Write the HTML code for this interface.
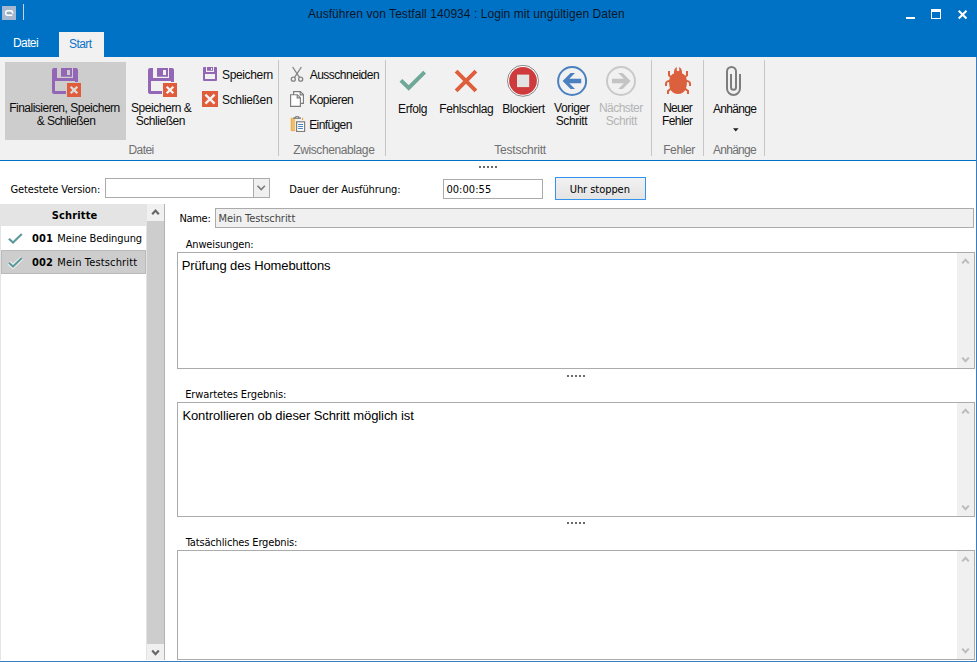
<!DOCTYPE html>
<html lang="de">
<head>
<meta charset="utf-8">
<title>Ausführen von Testfall 140934 : Login mit ungültigen Daten</title>
<style>
html,body{margin:0;padding:0;background:#fff;}
body{width:977px;height:662px;overflow:hidden;font-family:'Liberation Sans',sans-serif;}
#win{position:relative;width:977px;height:662px;overflow:hidden;background:#fff;}
#win div,#win svg{position:absolute;box-sizing:border-box;}
.t{position:absolute;line-height:1;white-space:nowrap;font-family:'Liberation Sans',sans-serif;}
.sep{width:1px;top:60px;height:96px;background:#c6c6c6;}
.box{border:1px solid #ababab;background:#fff;}
.dots{width:18px;height:2px;background:repeating-linear-gradient(90deg,#6a6a6a 0 2px,transparent 2px 4px);}
.sb{background:#f0f0f0;}

</style>
</head>
<body>
<div id="win">
<!-- title bar + tabs -->
<div style="left:0;top:0;width:977px;height:57px;background:#0072c6;"></div>
<div style="left:59px;top:32px;width:45px;height:25px;background:#f1f1f1;"></div>
<!-- ribbon -->
<div style="left:0;top:57px;width:977px;height:103px;background:#f1f1f1;"></div>
<div style="left:0;top:160px;width:977px;height:1px;background:#0072c6;"></div>
<div style="left:5px;top:62px;width:121px;height:78px;background:#cdcdcd;"></div>
<div class="sep" style="left:278px;"></div>
<div class="sep" style="left:385px;"></div>
<div class="sep" style="left:651px;"></div>
<div class="sep" style="left:703px;"></div>
<div class="sep" style="left:764px;"></div>
<!-- window border -->
<div style="left:976px;top:57px;width:1px;height:605px;background:#3a7ebf;"></div>
<div style="left:0;top:661px;width:977px;height:1px;background:#3a7ebf;"></div>
<div style="left:0;top:204px;width:1px;height:456px;background:#e4e4e4;"></div>
<!-- form row -->
<div class="dots" style="left:479px;top:166px;"></div>
<div class="box" style="left:105px;top:178px;width:165px;height:20px;"></div>
<div style="left:253px;top:179px;width:16px;height:18px;background:#f0f0f0;border-left:1px solid #ababab;"></div>
<div class="box" style="left:443px;top:179px;width:100px;height:20px;"></div>
<div style="left:555px;top:177px;width:91px;height:23px;border:1px solid #3393ee;background:linear-gradient(#f1f1f1,#e4e4e4);"></div>
<!-- steps list -->
<div style="left:0;top:204px;width:147px;height:22px;background:#e4e4e4;"></div>
<div style="left:1px;top:250px;width:145px;height:24px;background:#cdcdcd;border:1px solid #bababa;"></div>
<div style="left:146px;top:204px;width:1px;height:456px;background:#e4e4e4;"></div>
<div style="left:147px;top:204px;width:17px;height:456px;background:#f0f0f0;"></div>
<div style="left:147px;top:221px;width:17px;height:423px;background:#cdcdcd;"></div>
<div style="left:164px;top:204px;width:1px;height:456px;background:#b4b4b4;"></div>
<!-- right form -->
<div class="box" style="left:215px;top:208px;width:759px;height:20px;background:#f0f0f0;"></div>
<div class="box" style="left:177px;top:252px;width:798px;height:117px;"></div>
<div class="sb" style="left:957px;top:253px;width:17px;height:115px;"></div>
<div class="dots" style="left:567px;top:375px;"></div>
<div class="box" style="left:177px;top:402px;width:798px;height:115px;"></div>
<div class="sb" style="left:957px;top:403px;width:17px;height:113px;"></div>
<div class="dots" style="left:567px;top:522px;"></div>
<div class="box" style="left:177px;top:550px;width:798px;height:110px;"></div>
<div class="sb" style="left:957px;top:551px;width:17px;height:108px;"></div>
<!-- app icon -->
<svg style="left:2px;top:6px;" width="14" height="14" viewBox="0 0 14 14"><rect width="14" height="14" fill="#a5b8d0"/><rect x="5" y="6.2" width="4.6" height="1.8" fill="#92a7c2"/><path d="M10.7 7.4 C10.7 5.5 9.9 4.7 8.6 4.7 H5.7 C4.3 4.7 3.6 5.6 3.6 7 C3.6 8.4 4.3 9.3 5.7 9.3 H10.3" fill="none" stroke="#fff" stroke-width="1.5"/></svg>
<div style="left:23px;top:4px;width:1px;height:16px;background:#cdd0d4;"></div>
<!-- window buttons -->
<div style="left:906px;top:17px;width:9px;height:2px;background:#fff;"></div>
<div style="left:931px;top:9px;width:10px;height:10px;border:1px solid #fff;border-top-width:3px;"></div>
<svg style="left:957px;top:9px;" width="12" height="12" viewBox="0 0 12 12"><path d="M1.7 1.7 L9.5 9.5 M9.5 1.7 L1.7 9.5" stroke="#fff" stroke-width="2" fill="none"/></svg>
<!-- big save+close icons -->
<svg style="left:50px;top:66px;" width="32" height="32" viewBox="0 0 32 32"><path fill="#9467b6" fill-rule="evenodd" d="M4 2 H26 Q28 2 28 4 V26 Q28 28 26 28 H4 Q2 28 2 26 V4 Q2 2 4 2 Z M7 2 V12 H23 V2 H22 V10.7 H11 V2 Z M17 4 H20 V9 H17 Z M5 15 H25 V25 H5 Z"/><rect x="16" y="16" width="16" height="16" fill="#cdcdcd"/><rect x="17" y="17" width="14" height="14" fill="#df5d3a"/><path d="M20.7 20.7 L27.3 27.3 M27.3 20.7 L20.7 27.3" stroke="#dcdcdc" stroke-width="2.3" fill="none"/></svg>
<svg style="left:146px;top:66px;" width="32" height="32" viewBox="0 0 32 32"><path fill="#9467b6" fill-rule="evenodd" d="M4 2 H26 Q28 2 28 4 V26 Q28 28 26 28 H4 Q2 28 2 26 V4 Q2 2 4 2 Z M7 2 V12 H23 V2 H22 V10.7 H11 V2 Z M17 4 H20 V9 H17 Z M5 15 H25 V25 H5 Z"/><rect x="16" y="16" width="16" height="16" fill="#f1f1f1"/><rect x="17" y="17" width="14" height="14" fill="#df5d3a"/><path d="M20.7 20.7 L27.3 27.3 M27.3 20.7 L20.7 27.3" stroke="#f4f4f4" stroke-width="2.3" fill="none"/></svg>
<!-- small save -->
<svg style="left:202px;top:66px;" width="16" height="16" viewBox="0 0 16 16"><path fill="#9467b6" fill-rule="evenodd" d="M2 1 H14 Q15 1 15 2 V14 Q15 15 14 15 H2 Q1 15 1 14 V2 Q1 1 2 1 Z M4 1 V6 H12 V1 H11 V4.7 H5 V1 Z M9 2 H10 V4 H9 Z M3 8 H13 V13 H3 Z"/></svg>
<!-- small close -->
<svg style="left:202px;top:91px;" width="16" height="16" viewBox="0 0 16 16"><rect width="16" height="16" fill="#df5d3a"/><path d="M3.4 3.6 L12.6 12.6 M12.6 3.6 L3.4 12.6" stroke="#f4f4f4" stroke-width="2.4" fill="none"/></svg>
<!-- scissors -->
<svg style="left:289px;top:66px;" width="16" height="16" viewBox="0 0 16 16"><g fill="none" stroke="#848484" stroke-width="1.3"><path d="M3.6 1 L10.6 11.6"/><path d="M12.4 1 L5.4 11.6"/><circle cx="4.3" cy="13.2" r="2"/><circle cx="11.7" cy="13.2" r="2"/></g></svg>
<!-- copy -->
<svg style="left:289px;top:91px;" width="16" height="16" viewBox="0 0 16 16"><g fill="#fff" stroke="#7c7c7c" stroke-width="1.15"><path d="M4.6 0.6 H11.4 L14.4 3.6 V12.4 H4.6 Z"/><path d="M11.2 0.8 V3.8 H14.2" fill="none"/><path d="M1.6 3.7 H8.4 L11.4 6.7 V15.4 H1.6 Z"/><path d="M8.2 3.9 V6.9 H11.2" fill="none"/></g></svg>
<!-- paste -->
<svg style="left:290px;top:116px;" width="16" height="16" viewBox="0 0 16 16"><rect x="0.9" y="1.8" width="4.2" height="13.2" fill="#edc06c"/><path d="M1.3 1.8 V14.6 H5.1" fill="none" stroke="#e8a93c" stroke-width="0.9"/><rect x="12" y="1.8" width="1.1" height="2.3" fill="#e8a93c"/><rect x="3.3" y="1.3" width="7.6" height="1.6" fill="#7e7e7e"/><rect x="5.1" y="0.1" width="4" height="2" rx="0.9" fill="#7e7e7e"/><rect x="6.2" y="0.9" width="1.8" height="0.8" fill="#e4e4e4"/><rect x="6.6" y="5.8" width="8" height="9.7" fill="#fff" stroke="#7e7e7e" stroke-width="1.2"/><path d="M8.2 8.5 H13 M8.2 10.5 H13 M8.2 12.5 H13" stroke="#4a86c8" stroke-width="1"/></svg>
<!-- check -->
<svg style="left:396px;top:65px;" width="32" height="32" viewBox="0 0 32 32"><path d="M4.9 15.4 L12.7 23 L28.6 7.1" fill="none" stroke="#70a897" stroke-width="4"/></svg>
<!-- fail X -->
<svg style="left:450px;top:65px;" width="32" height="32" viewBox="0 0 32 32"><path d="M6.1 6.1 L25.9 25.9 M25.9 6.1 L6.1 25.9" fill="none" stroke="#de5f3c" stroke-width="4"/></svg>
<!-- blocked -->
<svg style="left:507px;top:65px;" width="32" height="32" viewBox="0 0 32 32"><circle cx="16" cy="15.8" r="15.5" fill="#fff" stroke="#6a6a6a" stroke-width="0.8"/><circle cx="16" cy="15.8" r="13.9" fill="#cf3a3c"/><rect x="10" y="9.6" width="12.2" height="12.5" fill="#e2e2e2"/></svg>
<!-- previous -->
<svg style="left:556px;top:65px;" width="32" height="32" viewBox="0 0 32 32"><circle cx="16.1" cy="16" r="14" fill="none" stroke="#4a80bf" stroke-width="2"/><path d="M6.6 16 L14.6 8 H19 L13.3 13.7 H25.2 V18.3 H13.3 L19 24 H14.6 Z" fill="#4a80bf"/></svg>
<!-- next (disabled) -->
<svg style="left:605px;top:65px;" width="32" height="32" viewBox="0 0 32 32"><circle cx="16" cy="16" r="14" fill="none" stroke="#c9c9c9" stroke-width="2"/><path d="M25.6 16 L17.6 8 H13.2 L18.9 13.7 H7 V18.3 H18.9 L13.2 24 H17.6 Z" fill="#c4c4c4"/></svg>
<!-- bug -->
<svg style="left:662px;top:65px;" width="32" height="32" viewBox="0 0 32 32"><g fill="#db603e"><path d="M16 7.8 C22.6 7.8 24.9 12 24.9 17.5 C24.9 24.5 21.6 29 16 29 C10.4 29 7.1 24.5 7.1 17.5 C7.1 12 9.4 7.8 16 7.8 Z"/><path d="M12 11 V7.2 Q12 3.6 14.8 2 V6 H17.2 V2 Q20 3.6 20 7.2 V11 Z"/></g><g fill="none" stroke="#db603e" stroke-width="2"><path d="M7 6 V10.4 L10.5 13.4"/><path d="M25 6 V10.4 L21.5 13.4"/><path d="M9 15.4 L5.6 16.4 Q4 17 4 18.6 V21"/><path d="M23 15.4 L26.4 16.4 Q28 17 28 18.6 V21"/><path d="M10.5 22.6 L6 26 V29"/><path d="M21.5 22.6 L26 26 V29"/></g></svg>
<!-- paperclip -->
<svg style="left:718px;top:65px;" width="32" height="32" viewBox="0 0 32 32"><path d="M22 9 V23.4 A6.5 6.5 0 0 1 9 23.4 V6.5 A4.5 4.5 0 0 1 18 6.5 V22.2 A2.5 2.5 0 0 1 13 22.2 V9" fill="none" stroke="#7d7d7d" stroke-width="2"/></svg>
<!-- dropdown arrow -->
<svg style="left:733px;top:128px;" width="6" height="4" viewBox="0 0 6 4"><path d="M0 0.3 H5.6 L2.8 3.4 Z" fill="#1e1e1e"/></svg>
<!-- combo chevron -->
<svg style="left:256px;top:184px;" width="10" height="8" viewBox="0 0 10 8"><path d="M1.5 1.7 L5.2 5.6 L8.9 1.7" fill="none" stroke="#7a7a7a" stroke-width="1.6"/></svg>
<!-- list checks -->
<svg style="left:7px;top:232px;" width="17" height="14" viewBox="0 0 17 14"><path d="M1.9 6.7 L6 10.5 L14.8 2.1" fill="none" stroke="#5a9a98" stroke-width="2.1"/></svg>
<svg style="left:7px;top:256px;" width="17" height="14" viewBox="0 0 17 14"><path d="M1.9 6.7 L6 10.5 L14.8 2.1" fill="none" stroke="#f6f6f6" stroke-width="4"/><path d="M1.9 6.7 L6 10.5 L14.8 2.1" fill="none" stroke="#5a9a98" stroke-width="2.1"/></svg>
<!-- scroll arrows -->
<svg style="left:151px;top:208px;" width="9" height="8" viewBox="0 0 9 8"><path d="M1.2 6.2 L4.5 2.6 L7.8 6.2" fill="none" stroke="#666" stroke-width="2.2"/></svg>
<svg style="left:151px;top:649px;" width="9" height="8" viewBox="0 0 9 8"><path d="M1.2 1.6 L4.5 5.2 L7.8 1.6" fill="none" stroke="#666" stroke-width="2.2"/></svg>
<svg style="left:961px;top:257px;" width="9" height="8" viewBox="0 0 9 8"><path d="M1.2 6.4 L4.5 2.8 L7.8 6.4" fill="none" stroke="#bdbdbd" stroke-width="2.1"/></svg>
<svg style="left:961px;top:356px;" width="9" height="8" viewBox="0 0 9 8"><path d="M1.2 1.6 L4.5 5.2 L7.8 1.6" fill="none" stroke="#bdbdbd" stroke-width="2.1"/></svg>
<svg style="left:961px;top:407px;" width="9" height="8" viewBox="0 0 9 8"><path d="M1.2 6.4 L4.5 2.8 L7.8 6.4" fill="none" stroke="#bdbdbd" stroke-width="2.1"/></svg>
<svg style="left:961px;top:504px;" width="9" height="8" viewBox="0 0 9 8"><path d="M1.2 1.6 L4.5 5.2 L7.8 1.6" fill="none" stroke="#bdbdbd" stroke-width="2.1"/></svg>
<svg style="left:961px;top:555px;" width="9" height="8" viewBox="0 0 9 8"><path d="M1.2 6.4 L4.5 2.8 L7.8 6.4" fill="none" stroke="#bdbdbd" stroke-width="2.1"/></svg>
<svg style="left:961px;top:647px;" width="9" height="8" viewBox="0 0 9 8"><path d="M1.2 1.6 L4.5 5.2 L7.8 1.6" fill="none" stroke="#bdbdbd" stroke-width="2.1"/></svg>

<span class="t" style="left:307.9px;top:8px;font-size:12px;color:#0a1626;letter-spacing:0.05px;">Ausführen von Testfall 140934 : Login mit ungültigen Daten</span>
<span class="t" style="left:13.0px;top:37px;font-size:12px;color:#ffffff;letter-spacing:-0.60px;">Datei</span>
<span class="t" style="left:69.1px;top:38px;font-size:12px;color:#0d74c8;letter-spacing:-0.60px;">Start</span>
<span class="t" style="left:9.2px;top:102px;font-size:12px;color:#0c0c0c;letter-spacing:-0.50px;">Finalisieren, Speichern</span>
<span class="t" style="left:36.7px;top:115px;font-size:12px;color:#0c0c0c;letter-spacing:-0.55px;">&amp; Schließen</span>
<span class="t" style="left:131.0px;top:102px;font-size:12px;color:#0c0c0c;letter-spacing:-0.45px;">Speichern &amp;</span>
<span class="t" style="left:135.7px;top:115px;font-size:12px;color:#0c0c0c;letter-spacing:-0.45px;">Schließen</span>
<span class="t" style="left:222.0px;top:69px;font-size:12px;color:#0c0c0c;letter-spacing:-0.35px;">Speichern</span>
<span class="t" style="left:222.0px;top:94px;font-size:12px;color:#0c0c0c;letter-spacing:-0.35px;">Schließen</span>
<span class="t" style="left:309.7px;top:69px;font-size:12px;color:#0c0c0c;letter-spacing:-0.50px;">Ausschneiden</span>
<span class="t" style="left:309.2px;top:94px;font-size:12px;color:#0c0c0c;letter-spacing:-0.50px;">Kopieren</span>
<span class="t" style="left:309.2px;top:119px;font-size:12px;color:#0c0c0c;letter-spacing:-0.60px;">Einfügen</span>
<span class="t" style="left:398.1px;top:103px;font-size:12px;color:#0c0c0c;letter-spacing:-0.40px;">Erfolg</span>
<span class="t" style="left:439.3px;top:103px;font-size:12px;color:#0c0c0c;letter-spacing:-0.40px;">Fehlschlag</span>
<span class="t" style="left:502.2px;top:103px;font-size:12px;color:#0c0c0c;letter-spacing:-0.40px;">Blockiert</span>
<span class="t" style="left:554.1px;top:102px;font-size:12px;color:#0c0c0c;letter-spacing:-0.40px;">Voriger</span>
<span class="t" style="left:555.7px;top:115px;font-size:12px;color:#0c0c0c;letter-spacing:-0.35px;">Schritt</span>
<span class="t" style="left:599.0px;top:102px;font-size:12px;color:#b4b4b4;letter-spacing:-0.55px;">Nächster</span>
<span class="t" style="left:605.7px;top:115px;font-size:12px;color:#b4b4b4;letter-spacing:-0.40px;">Schritt</span>
<span class="t" style="left:663.2px;top:102px;font-size:12px;color:#0c0c0c;letter-spacing:-0.80px;">Neuer</span>
<span class="t" style="left:662.0px;top:115px;font-size:12px;color:#0c0c0c;letter-spacing:-0.60px;">Fehler</span>
<span class="t" style="left:712.9px;top:103px;font-size:12px;color:#0c0c0c;letter-spacing:-0.65px;">Anhänge</span>
<span class="t" style="left:128.4px;top:144px;font-size:12px;color:#707070;letter-spacing:-0.55px;">Datei</span>
<span class="t" style="left:293.3px;top:144px;font-size:12px;color:#707070;letter-spacing:-0.40px;">Zwischenablage</span>
<span class="t" style="left:494.2px;top:144px;font-size:12px;color:#707070;letter-spacing:-0.20px;">Testschritt</span>
<span class="t" style="left:663.2px;top:144px;font-size:12px;color:#707070;letter-spacing:-0.40px;">Fehler</span>
<span class="t" style="left:712.9px;top:144px;font-size:12px;color:#707070;letter-spacing:-0.70px;">Anhänge</span>
<span class="t" style="left:10.4px;top:184px;font-size:11px;color:#000;letter-spacing:-0.10px;font-family:'DejaVu Sans Condensed', 'Liberation Sans', sans-serif;">Getestete Version:</span>
<span class="t" style="left:289.3px;top:184px;font-size:11px;color:#000;letter-spacing:-0.10px;font-family:'DejaVu Sans Condensed', 'Liberation Sans', sans-serif;">Dauer der Ausführung:</span>
<span class="t" style="left:446.4px;top:184px;font-size:11px;color:#000;letter-spacing:0.05px;font-family:'DejaVu Sans Condensed', 'Liberation Sans', sans-serif;">00:00:55</span>
<span class="t" style="left:569.7px;top:184px;font-size:11px;color:#000;letter-spacing:-0.05px;font-family:'DejaVu Sans Condensed', 'Liberation Sans', sans-serif;">Uhr stoppen</span>
<span class="t" style="left:51.7px;top:210px;font-size:11px;color:#000;letter-spacing:0.15px;font-weight:bold;font-family:'DejaVu Sans Condensed', 'Liberation Sans', sans-serif;">Schritte</span>
<span class="t" style="left:32.0px;top:233px;font-size:11px;color:#000;letter-spacing:0.15px;font-weight:bold;font-family:'DejaVu Sans Condensed', 'Liberation Sans', sans-serif;">001</span>
<span class="t" style="left:57.3px;top:233px;font-size:11px;color:#000;letter-spacing:-0.10px;font-family:'DejaVu Sans Condensed', 'Liberation Sans', sans-serif;">Meine Bedingung</span>
<span class="t" style="left:32.0px;top:257px;font-size:11px;color:#000;letter-spacing:0.15px;font-weight:bold;font-family:'DejaVu Sans Condensed', 'Liberation Sans', sans-serif;">002</span>
<span class="t" style="left:57.3px;top:257px;font-size:11px;color:#000;letter-spacing:0.15px;font-family:'DejaVu Sans Condensed', 'Liberation Sans', sans-serif;">Mein Testschritt</span>
<span class="t" style="left:179.4px;top:213px;font-size:11px;color:#000;letter-spacing:-0.30px;font-family:'DejaVu Sans Condensed', 'Liberation Sans', sans-serif;">Name:</span>
<span class="t" style="left:218.5px;top:213px;font-size:11px;color:#444444;letter-spacing:-0.05px;font-family:'DejaVu Sans Condensed', 'Liberation Sans', sans-serif;">Mein Testschritt</span>
<span class="t" style="left:185.7px;top:239px;font-size:11px;color:#000;letter-spacing:-0.15px;font-family:'DejaVu Sans Condensed', 'Liberation Sans', sans-serif;">Anweisungen:</span>
<span class="t" style="left:181.7px;top:259px;font-size:13px;color:#000;letter-spacing:-0.10px;">Prüfung des Homebuttons</span>
<span class="t" style="left:185.2px;top:389px;font-size:11px;color:#000;letter-spacing:-0.10px;font-family:'DejaVu Sans Condensed', 'Liberation Sans', sans-serif;">Erwartetes Ergebnis:</span>
<span class="t" style="left:182.4px;top:409px;font-size:13px;color:#000;letter-spacing:-0.10px;">Kontrollieren ob dieser Schritt möglich ist</span>
<span class="t" style="left:185.7px;top:537px;font-size:11px;color:#000;letter-spacing:-0.15px;font-family:'DejaVu Sans Condensed', 'Liberation Sans', sans-serif;">Tatsächliches Ergebnis:</span>
</div>
</body>
</html>
